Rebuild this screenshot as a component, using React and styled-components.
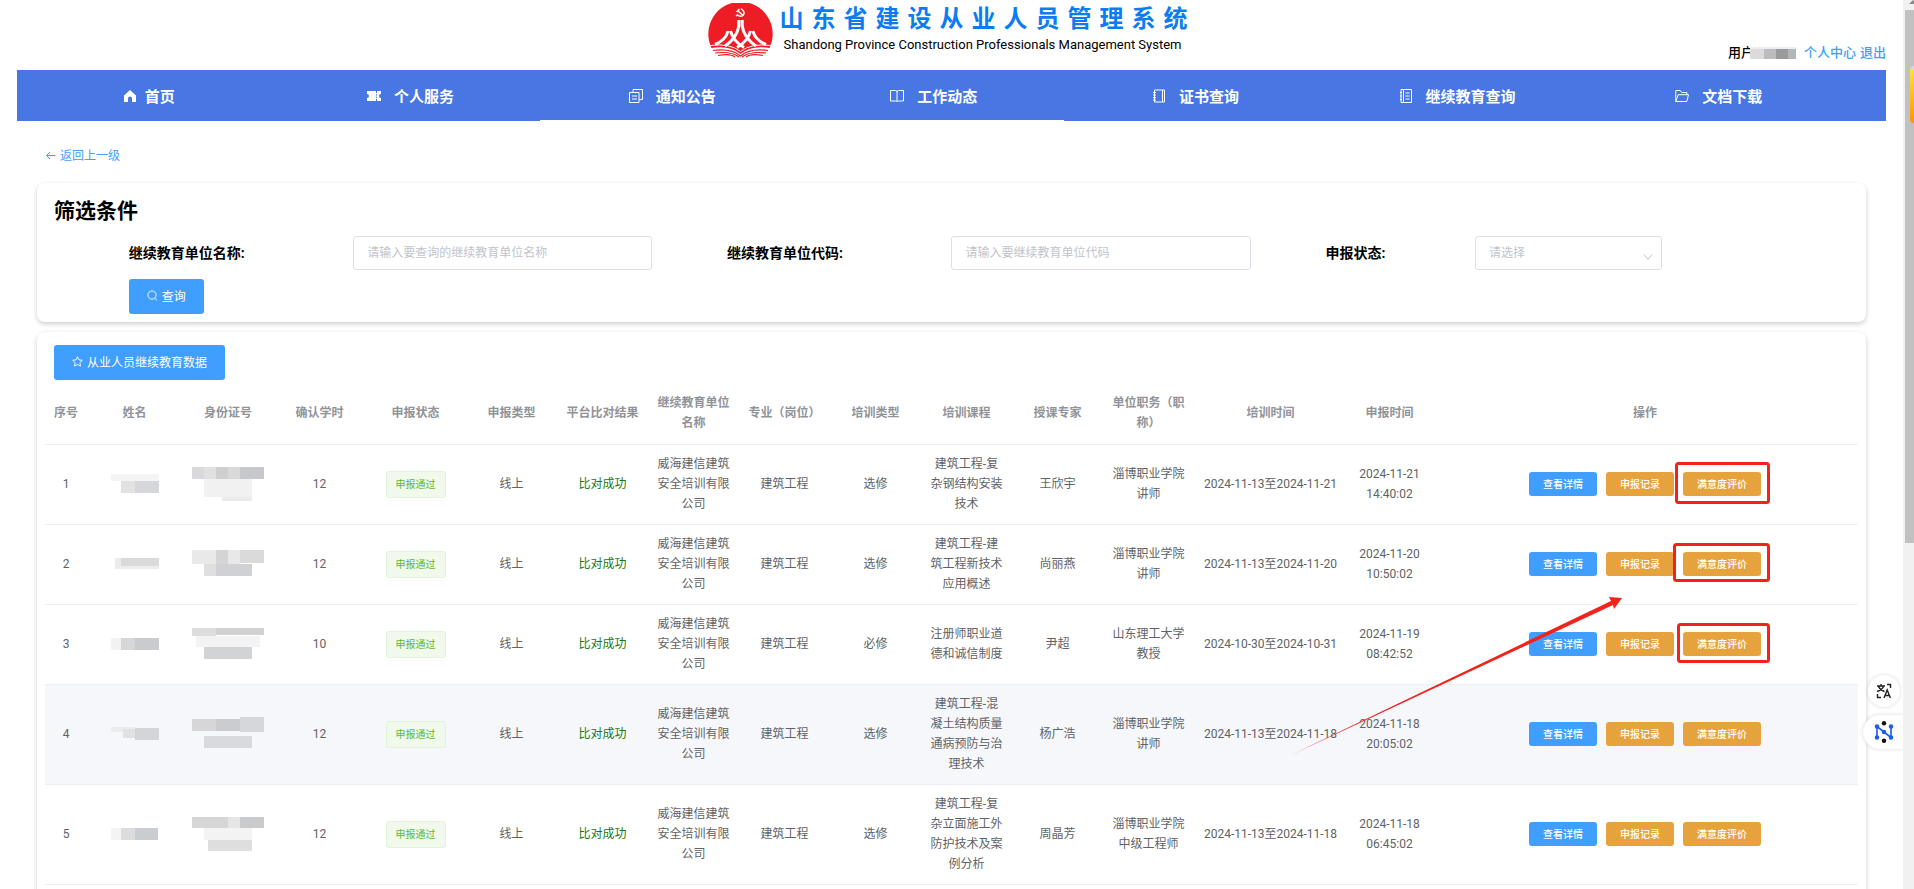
import React, { useState } from "react";
import styled, { createGlobalStyle } from "styled-components";

const GlobalStyle = createGlobalStyle`
  * {
    box-sizing: border-box;
  }
  body {
    margin: 0;
    overflow: hidden;
    background: #ffffff;
    font-family: Roboto, "Noto Sans CJK SC", sans-serif;
    font-size: 12px;
    color: #606266;
  }
  button,
  input,
  select {
    font-family: inherit;
    font-size: 12px;
  }
`;

const Page = styled.div`
  display: flex;
  height: 100vh;
  overflow: hidden;
`;

const Main = styled.main`
  position: relative;
  flex: 1;
  min-width: 0;
  padding: 0 17px;
`;

const Header = styled.header`
  display: grid;
  grid-template-columns: 1fr auto 1fr;
  height: 70px;
`;

const Brand = styled.div`
  grid-column: 2;
  display: flex;
  gap: 7px;
  padding-top: 3px;
  h1 {
    margin: 0;
    font-size: 24px;
    line-height: 32px;
    font-weight: 700;
    letter-spacing: 8px;
    color: #0c7cf2;
  }
  p {
    margin: 0;
    padding-left: 4px;
    font-size: 13px;
    line-height: 20px;
    color: #000000;
  }
`;

const UserBar = styled.div`
  display: flex;
  align-items: center;
  justify-self: end;
  align-self: end;
  gap: 4px;
  margin-bottom: 7px;
  font-size: 13px;
  line-height: 20px;
  font-weight: 500;
  color: #000000;
  a {
    color: #409eff;
    text-decoration: none;
  }
  svg {
    margin: 0 4px 0 -8px;
  }
`;

const Nav = styled.nav`
  display: flex;
  height: 51px;
  background: #4876e2;
`;

const NavItem = styled.a`
  display: flex;
  align-items: center;
  justify-content: center;
  gap: ${(props) => (props.$tight ? "8px" : "13px")};
  width: 14%;
  padding: 1px 0 0 2px;
  border-bottom: 1px solid ${(props) => (props.$line ? "#ffffff" : "#4876e2")};
  font-size: 15px;
  font-weight: 700;
  color: #ffffff;
  text-decoration: none;
`;

const BackLink = styled.a`
  display: flex;
  align-items: center;
  gap: 4px;
  width: max-content;
  margin: 25px 0 17px 28px;
  line-height: 20px;
  color: #409eff;
  text-decoration: none;
`;

const Card = styled.section`
  margin: 0 20px 10px;
  border-radius: 8px;
  background: #ffffff;
  box-shadow: 0 2px 5px rgba(0, 0, 0, 0.2);
`;

const FilterCard = styled(Card)`
  padding: 13px 17px 8px;
  h2 {
    margin: 0 0 9px;
    font-size: 21px;
    line-height: 31px;
    color: #000000;
  }
`;

const FilterForm = styled.form`
  display: grid;
  grid-template-columns: repeat(3, 1fr);
  row-gap: 9px;
`;

const Field = styled.div`
  display: grid;
  grid-template-columns: ${(props) => (props.$short ? "2fr 5fr" : "3fr 4fr")};
  align-items: center;
  padding-left: 12.5%;
  label {
    padding-bottom: 2px;
    font-size: 14px;
    font-weight: 700;
    color: #000000;
  }
`;

const TextInput = styled.input`
  width: 100%;
  height: 34px;
  padding: 0 13px;
  border: 1px solid #dcdfe6;
  border-radius: 3px;
  background: #ffffff;
  color: #606266;
  outline: none;
  &::placeholder {
    color: #c0c4cc;
  }
`;

const SelectBox = styled.div`
  position: relative;
  width: 187px;
  select {
    width: 100%;
    height: 34px;
    padding: 0 13px;
    border: 1px solid #dcdfe6;
    border-radius: 3px;
    background: #ffffff;
    color: #c0c4cc;
    appearance: none;
  }
  svg {
    position: absolute;
    right: 9px;
    bottom: 8px;
    pointer-events: none;
  }
`;

const PrimaryButton = styled.button`
  display: flex;
  align-items: center;
  gap: 4px;
  height: 35px;
  padding: 0 18px 2px;
  border: none;
  border-radius: 3px;
  background: #409eff;
  color: #ffffff;
  cursor: pointer;
`;

const ButtonCell = styled.div`
  grid-column: 1;
  padding-left: 12.5%;
`;

const TableCard = styled(Card)`
  padding: 13px 8px 40px;
  > ${PrimaryButton} {
    margin-left: 9px;
  }
`;

const DataTable = styled.table`
  width: 100%;
  table-layout: fixed;
  border-collapse: separate;
  border-spacing: 0;
  text-align: center;
  th,
  td {
    padding: 9px 9px 10px;
    border-bottom: 1px solid #ebeef5;
    line-height: 20px;
    vertical-align: middle;
  }
  th {
    height: 65px;
    padding: 10px 9px 8px;
    font-weight: 700;
    color: #909399;
    word-break: break-all;
  }
  td svg {
    display: block;
    margin: 0 auto;
  }
`;

const Row = styled.tr`
  background: ${(props) => (props.$active ? "#f5f7fa" : "#ffffff")};
`;

const Tag = styled.span`
  display: block;
  width: 60px;
  margin: 0 auto;
  border: 1px solid #e1f3d8;
  border-radius: 3px;
  background: #f0f9eb;
  font-size: 10px;
  line-height: 25px;
  color: #5cb832;
`;

const Matched = styled.span`
  color: #157a15;
`;

const Actions = styled.div`
  display: flex;
  justify-content: center;
  gap: 9px;
`;

const SmallButton = styled.button`
  height: 24px;
  padding: 0 14px 2px;
  border: none;
  border-radius: 3px;
  background: ${(props) => (props.$warn ? "#e6a23c" : "#409eff")};
  font-size: 10px;
  font-weight: 500;
  color: #ffffff;
  cursor: pointer;
`;

const Marks = styled.svg`
  position: absolute;
  top: 460px;
  right: 132px;
  pointer-events: none;
`;

const FloatTools = styled.div`
  position: absolute;
  top: 675px;
  right: 0;
  display: flex;
  flex-direction: column;
  align-items: flex-end;
  gap: 8px;
`;

const TranslateButton = styled.button`
  display: grid;
  place-items: center;
  width: 32px;
  height: 32px;
  margin-right: 3px;
  padding: 0;
  border: none;
  border-radius: 50%;
  background: #ffffff;
  box-shadow: 0 0 4px rgba(0, 0, 0, 0.15);
`;

const AssistButton = styled(TranslateButton)`
  width: 40px;
  height: 34px;
  margin: 0;
  padding-left: 2px;
  border-radius: 17px 0 0 17px;
`;

const ScrollTrack = styled.div`
  position: relative;
  display: flex;
  flex-direction: column;
  width: 11px;
  padding-left: 2px;
  overflow: hidden;
  background: #f1f1f1;
`;

const ScrollThumb = styled.div`
  width: 100%;
  height: 60%;
  background: #c1c1c1;
`;

const SideWidget = styled.div`
  position: absolute;
  top: 66px;
  right: 0;
  width: 4px;
  height: 57px;
  border-top: 4px solid #d8d8d8;
  border-radius: 4px 0 0 4px;
  background: linear-gradient(#ffe040, #ff9500);
`;

const stroke = { fill: "none", stroke: "currentColor", strokeWidth: 1 };

const navIcons = {
  home: <path fill="currentColor" d="M7 1 1 6.5V13h4V9.5a2 2 0 0 1 4 0V13h4V6.500z" />,
  ticket: (
    <path
      fill="currentColor"
      d="M0 2h9v2h1V2h4v3a2 2 0 0 0 0 4v3h-4v-2H9v2H0V9a2 2 0 0 0 0-4zM9 5.200v1.300h1V5.200zM9 7.700V9h1V7.700z"
    />
  ),
  copy: (
    <g {...stroke}>
      <path d="M4 3.500V.5h9.500v10H10" />
      <path d="M.5 3.500H10v10H.5zM3 7h5M3 10h5" />
    </g>
  ),
  book: (
    <g {...stroke}>
      <path d="M.5 1.500h5q1.500 0 1.500 1.500 0-1.500 1.500-1.500h5v10.500H8.500Q7 12 7 13q0-1-1.500-1h-5zM7 3v9" />
    </g>
  ),
  notebook: (
    <g {...stroke}>
      <path d="M2.500 1h10v12h-10zM10.500 1v12M1 3.500h3M1 6h3M1 8.500h3M1 11h3" />
    </g>
  ),
  list: (
    <g {...stroke}>
      <path d="M2 .5h10.500v13H2zM4.500.5v13M6.500 4h4M6.500 7h4M6.500 10h4M1 3.500h2M1 7h2M1 10.500h2" />
    </g>
  ),
  folder: (
    <g {...stroke}>
      <path d="M.8 12.500v-11h4.500l1.500 2h5v2.200M.8 12.500l2.400-6.800h10.300l-1.700 6.800z" />
    </g>
  ),
};

const navItems = [
  { name: "首页", icon: "home", tight: true },
  { name: "个人服务", icon: "ticket" },
  { name: "通知公告", icon: "copy", line: true },
  { name: "工作动态", icon: "book", line: true },
  { name: "证书查询", icon: "notebook" },
  { name: "继续教育查询", icon: "list" },
  { name: "文档下载", icon: "folder" },
];

const columns = [
  ["序号", 42],
  ["姓名", 95],
  ["身份证号", 92],
  ["确认学时", 91],
  ["申报状态", 101],
  ["申报类型", 91],
  ["平台比对结果", 91],
  ["继续教育单位名称", 91],
  ["专业（岗位）", 91],
  ["培训类型", 91],
  ["培训课程", 91],
  ["授课专家", 91],
  ["单位职务（职称）", 91],
  ["培训时间", 153],
  ["申报时间", 85],
  ["操作", null],
];

const rows = [
  {
    hours: 12,
    kind: "选修",
    course: "建筑工程-复杂钢结构安装技术",
    expert: "王欣宇",
    title: "淄博职业学院讲师",
    period: "2024-11-13至2024-11-21",
    time: "2024-11-21 14:40:02",
    nameMask: [[0, 0, 48, 7, "#f4f4f4"], [10, 7, 14, 12, "#e2e2e2"], [24, 7, 24, 12, "#d6d7da"]],
    idMask: [
      [0, 0, 12, 12, "#d9d9db"],
      [12, 0, 12, 12, "#e1e1e1"],
      [24, 0, 12, 12, "#cfcfd1"],
      [36, 0, 12, 12, "#d9d9da"],
      [48, 0, 24, 12, "#c6c8cb"],
      [12, 12, 48, 18, "#f1f1f2"],
      [30, 30, 30, 4, "#ebebeb"],
    ],
  },
  {
    hours: 12,
    kind: "选修",
    course: "建筑工程-建筑工程新技术应用概述",
    expert: "尚丽燕",
    title: "淄博职业学院讲师",
    period: "2024-11-13至2024-11-20",
    time: "2024-11-20 10:50:02",
    nameMask: [[4, 4, 44, 11, "#ececec"], [10, 4, 38, 8, "#dadadb"]],
    idMask: [
      [0, 3, 24, 14, "#e9e9ea"],
      [24, 3, 12, 14, "#d4d4d5"],
      [36, 3, 12, 14, "#e8e8e8"],
      [48, 3, 24, 13, "#dadadb"],
      [12, 17, 12, 12, "#dfdfdf"],
      [24, 17, 36, 12, "#d0d1d5"],
    ],
  },
  {
    hours: 10,
    kind: "必修",
    course: "注册师职业道德和诚信制度",
    expert: "尹超",
    title: "山东理工大学教授",
    period: "2024-10-30至2024-10-31",
    time: "2024-11-19 08:42:52",
    nameMask: [[0, 4, 10, 12, "#f2f2f2"], [10, 4, 14, 12, "#d5d6d8"], [24, 4, 24, 12, "#c9cbce"]],
    idMask: [
      [0, 1, 24, 8, "#dddddd"],
      [24, 1, 48, 7, "#d0d1d3"],
      [4, 9, 64, 11, "#f3f3f3"],
      [12, 20, 48, 12, "#d2d3d5"],
    ],
  },
  {
    hours: 12,
    kind: "选修",
    course: "建筑工程-混凝土结构质量通病预防与治理技术",
    expert: "杨广浩",
    title: "淄博职业学院讲师",
    period: "2024-11-13至2024-11-18",
    time: "2024-11-18 20:05:02",
    active: true,
    nameMask: [[0, 3, 24, 5, "#ececee"], [12, 5, 12, 9, "#e0e1e3"], [24, 4, 24, 12, "#d4d5d9"]],
    idMask: [
      [0, 2, 24, 12, "#d6d6d9"],
      [24, 2, 24, 12, "#cbccd0"],
      [48, 0, 24, 15, "#d6d7da"],
      [12, 19, 48, 12, "#d8dadd"],
    ],
  },
  {
    hours: 12,
    kind: "选修",
    course: "建筑工程-复杂立面施工外防护技术及案例分析",
    expert: "周晶芳",
    title: "淄博职业学院中级工程师",
    period: "2024-11-13至2024-11-18",
    time: "2024-11-18 06:45:02",
    nameMask: [[0, 4, 10, 12, "#f4f4f4"], [10, 4, 14, 12, "#dcdcdc"], [24, 4, 23, 12, "#c9cdd1"]],
    idMask: [
      [0, 0, 36, 11, "#d6d6d7"],
      [36, 0, 12, 11, "#e6e6e6"],
      [48, 0, 24, 11, "#c9cacc"],
      [12, 11, 48, 12, "#f3f3f3"],
      [16, 23, 44, 11, "#dedede"],
    ],
  },
];

const Mask = ({ cells, width, height }) => (
  <svg width={width} height={height}>
    {cells.map(([x, y, w, h, color], i) => (
      <rect key={i} x={x} y={y} width={w} height={h} fill={color} />
    ))}
  </svg>
);

const Logo = () => (
  <svg width="65" height="55" viewBox="0 0 65 55">
    <path
      fill="#ee1c25"
      d="M3.500 45A32.200 32.200 0 1 1 61.500 45Q43 42 32.500 51Q22 42 3.500 45z"
    />
    <g fill="none" stroke="#ee1c25" strokeWidth="1.200">
      <path d="M5 47.500Q23 45 32.500 53Q42 45 60 47.500" />
      <path d="M7 50Q23 48 31 54M58 50Q42 48 34 54" />
      <path d="M10 52.500Q22 50 27 54M55 52.500Q43 50 38 54" />
    </g>
    <g fill="none" stroke="#ffffff">
      <path strokeWidth="1" d="M2 42.500Q22 40 32.500 48.500Q43 40 63 42.500" />
      <path
        strokeWidth="3"
        d="M30.800 17v6Q29 35 17 43M34.200 17v6Q36 35 48 43M20 28Q18 37 7 41.500M45 28Q47 37 58 41.500M22.500 28Q25 38 36 44.500M42.500 28Q40 38 29 44.500"
      />
      <path strokeWidth="1.500" d="M33 5.500q5 4 2 7-3 2-6-1M29.500 7.500l5 4.500M28.500 9l3-3M28 13l2-1.500" />
    </g>
  </svg>
);

const App = () => {
  const [unitName, setUnitName] = useState("");
  const [unitCode, setUnitCode] = useState("");
  const [status, setStatus] = useState("");

  return (
    <Page>
      <GlobalStyle />
      <Main>
        <Header>
          <Brand>
            <Logo />
            <div>
              <h1>山东省建设从业人员管理系统</h1>
              <p>Shandong Province Construction Professionals Management System</p>
            </div>
          </Brand>
          <UserBar>
            <span>用户</span>
            <Mask
              width={46}
              height={14}
              cells={[
                [0, 1, 46, 3, "#eeeeee"],
                [0, 3, 14, 10, "#dcdadb"],
                [14, 3, 12, 10, "#bcbcbe"],
                [26, 3, 12, 10, "#999b9c"],
                [38, 3, 8, 10, "#b2b6b8"],
              ]}
            />
            <a href="#center">个人中心</a>
            <a href="#logout">退出</a>
          </UserBar>
        </Header>

        <Nav>
          {navItems.map((item) => (
            <NavItem key={item.name} href="#nav" $tight={item.tight} $line={item.line}>
              <svg width="14" height="14" viewBox="0 0 14 14">
                {navIcons[item.icon]}
              </svg>
              {item.name}
            </NavItem>
          ))}
        </Nav>

        <BackLink href="#back">
          <svg width="11" height="10" viewBox="0 0 11 10" {...stroke}>
            <path d="M10.500 4.500H1.500M5 1 1.500 4.500 5 8" />
          </svg>
          返回上一级
        </BackLink>

        <FilterCard>
          <h2>筛选条件</h2>
          <FilterForm onSubmit={(e) => e.preventDefault()}>
            <Field>
              <label htmlFor="unitName">继续教育单位名称:</label>
              <TextInput
                id="unitName"
                value={unitName}
                onChange={(e) => setUnitName(e.target.value)}
                placeholder="请输入要查询的继续教育单位名称"
              />
            </Field>
            <Field>
              <label htmlFor="unitCode">继续教育单位代码:</label>
              <TextInput
                id="unitCode"
                value={unitCode}
                onChange={(e) => setUnitCode(e.target.value)}
                placeholder="请输入要继续教育单位代码"
              />
            </Field>
            <Field $short>
              <label htmlFor="status">申报状态:</label>
              <SelectBox>
                <select id="status" value={status} onChange={(e) => setStatus(e.target.value)}>
                  <option value="">请选择</option>
                </select>
                <svg width="10" height="10" viewBox="0 0 10 10" fill="none" stroke="#c0c4cc">
                  <path d="M1 2.500 5 7.500 9 2.500" />
                </svg>
              </SelectBox>
            </Field>
            <ButtonCell>
              <PrimaryButton type="submit">
                <svg width="11" height="11" viewBox="0 0 12 12" {...stroke}>
                  <circle cx="5.500" cy="5.500" r="4.500" />
                  <path d="m8.500 9 2.500 2.500" />
                </svg>
                查询
              </PrimaryButton>
            </ButtonCell>
          </FilterForm>
        </FilterCard>

        <TableCard>
          <PrimaryButton type="button">
            <svg width="11" height="11" viewBox="0 0 12 12" {...stroke}>
              <path d="M6 .8 7.600 4.200l3.700.5-2.700 2.600.7 3.700L6 9.200 2.700 11l.7-3.700L.7 4.700l3.700-.5z" />
            </svg>
            从业人员继续教育数据
          </PrimaryButton>
          <DataTable>
            <colgroup>
              {columns.map(([name, width]) => (
                <col key={name} width={width || undefined} />
              ))}
            </colgroup>
            <thead>
              <tr>
                {columns.map(([name]) => (
                  <th key={name} scope="col">
                    {name}
                  </th>
                ))}
              </tr>
            </thead>
            <tbody>
              {rows.map((row, index) => (
                <Row key={row.time} $active={row.active}>
                  <td>{index + 1}</td>
                  <td>
                    <Mask cells={row.nameMask} width={48} height={20} />
                  </td>
                  <td>
                    <Mask cells={row.idMask} width={72} height={34} />
                  </td>
                  <td>{row.hours}</td>
                  <td>
                    <Tag>申报通过</Tag>
                  </td>
                  <td>线上</td>
                  <td>
                    <Matched>比对成功</Matched>
                  </td>
                  <td>威海建信建筑安全培训有限公司</td>
                  <td>建筑工程</td>
                  <td>{row.kind}</td>
                  <td>{row.course}</td>
                  <td>{row.expert}</td>
                  <td>{row.title}</td>
                  <td>{row.period}</td>
                  <td>{row.time}</td>
                  <td>
                    <Actions>
                      <SmallButton>查看详情</SmallButton>
                      <SmallButton $warn>申报记录</SmallButton>
                      <SmallButton $warn>满意度评价</SmallButton>
                    </Actions>
                  </td>
                </Row>
              ))}
            </tbody>
          </DataTable>
        </TableCard>

        {/* red boxes round the rating buttons and the arrow to them */}
        <Marks width="482" height="300" viewBox="0 0 482 300">
          <g fill="none" stroke="#f3231b" strokeWidth="3">
            <rect x="387.500" y="3.500" width="92" height="39" rx="2" />
            <rect x="385.500" y="84.500" width="94" height="36" rx="2" />
            <rect x="389.500" y="164.500" width="90" height="37" rx="2" />
          </g>
          <path fill="#f3231b" d="M2 295 322 141l-2-4 13 1-8 11-1-4z" />
        </Marks>

        <FloatTools>
          <TranslateButton aria-label="翻译">
            <svg width="16" height="16" viewBox="0 0 16 16" fill="none" stroke="#222222" strokeWidth="1.400">
              <path d="M1 3h8M5 1v2M2.500 3.500Q4 7 8.500 8.500M7.500 3.500Q6 7 1 8.500M8 15l3.200-8 3.200 8M9.200 12.500h4M11 1.500h3.500V5M1.500 11v3.500H5" />
            </svg>
          </TranslateButton>
          <AssistButton aria-label="助手">
            <svg width="20" height="22" viewBox="0 0 20 22">
              <path d="M3 16.500v-11l14 11v-11" fill="none" stroke="#1a5cf0" strokeWidth="1.600" />
              <g fill="#1a5cf0">
                <circle cx="3" cy="5.500" r="2.200" />
                <circle cx="3" cy="16.500" r="2.200" />
                <circle cx="17" cy="5.500" r="2.200" />
                <circle cx="17" cy="16.500" r="2.200" />
                <circle cx="10" cy="11" r="2.200" />
              </g>
              <circle cx="10" cy="2.300" r="2.200" fill="#111111" />
              <circle cx="10" cy="19.700" r="2.200" fill="#111111" />
            </svg>
          </AssistButton>
        </FloatTools>
      </Main>

      <ScrollTrack>
        <svg width="9" height="10" viewBox="0 0 9 10">
          <path d="M4 4h8L8 0z" fill="#8a8a8a" />
        </svg>
        <ScrollThumb />
        <SideWidget />
      </ScrollTrack>
    </Page>
  );
};

export default App;
